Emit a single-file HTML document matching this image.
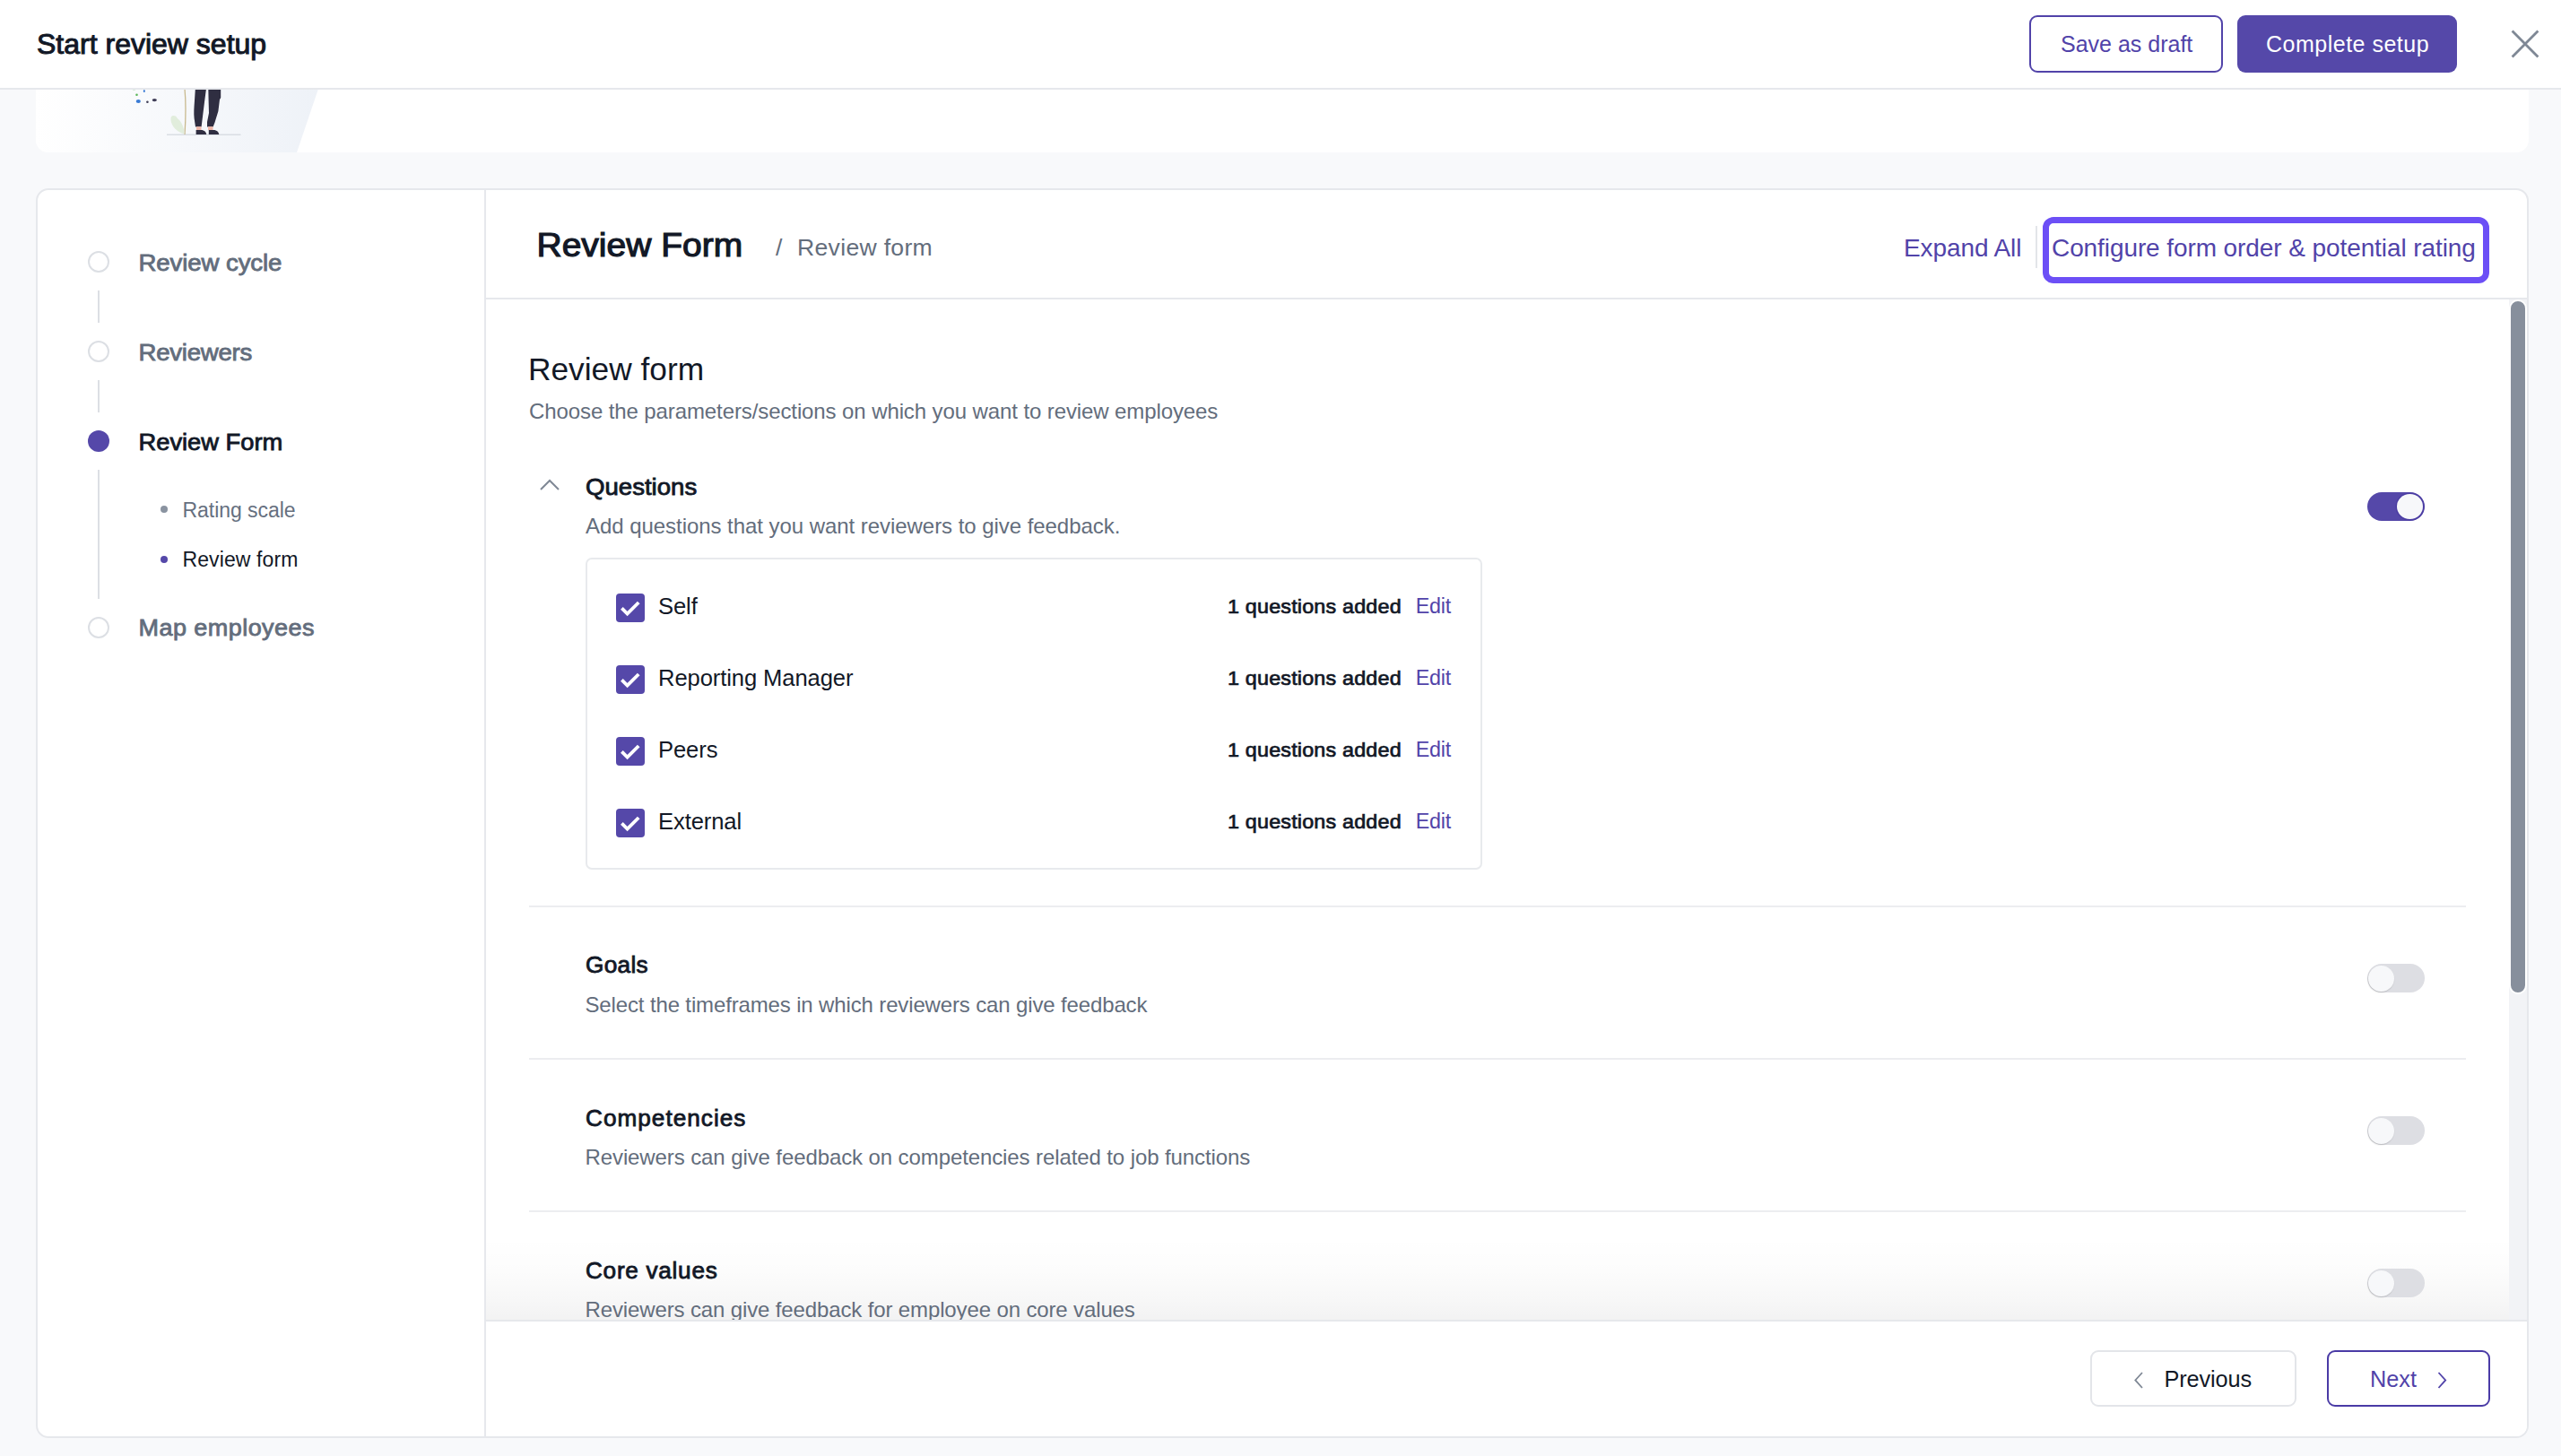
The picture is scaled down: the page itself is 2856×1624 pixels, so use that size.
<!DOCTYPE html>
<html><head><meta charset="utf-8">
<style>
html,body{margin:0;padding:0;}
body{width:2856px;height:1624px;position:relative;overflow:hidden;background:#F8F9FB;font-family:"Liberation Sans",sans-serif;}
.a{position:absolute;box-sizing:border-box;}
.t{position:absolute;white-space:nowrap;}
@media (max-width:1600px){html{zoom:0.5;}}
</style></head><body>
<div class="a" style="left:40px;top:40px;width:2780px;height:130px;background:#fff;border-radius:0 0 14px 14px;overflow:hidden;"><svg width="400" height="130" style="position:absolute;left:0;top:0"><defs><linearGradient id="g1" x1="0" y1="0" x2="1" y2="0"><stop offset="0" stop-color="#FFFFFF"/><stop offset="1" stop-color="#EDF1F7"/></linearGradient></defs><path d="M0 0 H335 L291 130 H0 Z" fill="url(#g1)"/><rect x="146" y="109.6" width="82.5" height="1.2" fill="#D3D7DE"/><path d="M166 59 C168 80 167 95 166 110" stroke="#C8B98E" stroke-width="1.3" fill="none"/><path d="M165.5 109.5 C154 106 149.5 97 150.6 91 C151.5 88.5 154 88.6 156 89.5 C157.5 91.6 158 92.5 159 93 C163 97 165.6 103 165.5 109.5Z" fill="#E1EDDC"/><path d="M177.9 58 H190.1 L188 74 L186.5 86 L184.6 101.4 H178 L176.6 92 C176 86 176.4 80 177 72 Z" fill="#2F2E41"/><path d="M192.3 58 H206.2 L206.2 69 L205 71 L203.4 84 L199.4 97 L197.6 101.4 H191 L191 96 L193 86 L192.6 72 Z" fill="#2F2E41"/><rect x="179" y="101.2" width="5.5" height="3.9" fill="#EFB7A9"/><rect x="192" y="101.2" width="5.5" height="3.9" fill="#EFB7A9"/><path d="M178.6 105 H184 C188 105 190 107.5 190.2 110 H178.6 Z" fill="#2F2E41"/><path d="M192.8 105 H198 C202 105 204 107.5 204.2 110 H192.8 Z" fill="#2F2E41"/><ellipse cx="114.3" cy="73" rx="2.6" ry="2" fill="#3A7BD5"/><circle cx="124.4" cy="73.8" r="1.3" fill="#3F3D56"/><ellipse cx="132.3" cy="71.6" rx="2.6" ry="1.7" fill="#3F3D56"/><circle cx="112.5" cy="65.8" r="1.3" fill="#5BB65A"/><ellipse cx="120.8" cy="61.5" rx="1" ry="1.6" fill="#3A7BD5"/><rect x="108" y="59" width="3" height="1.2" fill="#5BB65A"/></svg></div>
<div class="a" style="left:0;top:0;width:2856px;height:100px;background:#fff;border-bottom:2px solid #E6E8EC;"></div>
<div class="t" style="left:41.0px;top:33.31px;font-size:32px;line-height:32px;color:#121826;letter-spacing:0px;-webkit-text-stroke:1.02px #121826;transform-origin:0 27.09px;transform:scaleY(0.965);">Start review setup</div>
<div class="a" style="left:2263px;top:17px;width:216px;height:64px;border:2px solid #5143A9;border-radius:9px;background:#fff;"></div>
<div class="t" style="left:2298.0px;top:36.63px;font-size:25px;line-height:25px;color:#5143A9;letter-spacing:0px;">Save as draft</div>
<div class="a" style="left:2495px;top:17px;width:245px;height:64px;background:#5548A9;border-radius:9px;"></div>
<div class="t" style="left:2527.0px;top:36.63px;font-size:25px;line-height:25px;color:#FFFFFF;letter-spacing:0.5px;">Complete setup</div>
<svg class="a" style="left:2798px;top:31px" width="36" height="36"><path d="M3.6 3.6 L32.4 32.4 M32.4 3.6 L3.6 32.4" stroke="#7F8895" stroke-width="2.8" stroke-linecap="butt"/></svg>
<div class="a" style="left:40px;top:210px;width:2780px;height:1394px;background:#fff;border:2px solid #E6E8EC;border-radius:14px;overflow:hidden;"></div>
<div class="a" style="left:540px;top:212px;width:2px;height:1390px;background:#E6E8EC;"></div>
<div class="a" style="left:98px;top:280px;width:24px;height:24px;border:2px solid #DCDFE4;border-radius:50%;background:#fff;"></div>
<div class="a" style="left:98px;top:380px;width:24px;height:24px;border:2px solid #DCDFE4;border-radius:50%;background:#fff;"></div>
<div class="a" style="left:98px;top:688px;width:24px;height:24px;border:2px solid #DCDFE4;border-radius:50%;background:#fff;"></div>
<div class="a" style="left:98px;top:480px;width:24px;height:24px;border-radius:50%;background:#5548A9;"></div>
<div class="a" style="left:109px;top:324px;width:2px;height:36px;background:#DCDFE4;"></div>
<div class="a" style="left:109px;top:424px;width:2px;height:36px;background:#DCDFE4;"></div>
<div class="a" style="left:109px;top:524px;width:2px;height:144px;background:#DCDFE4;"></div>
<div class="t" style="left:154.5px;top:278.73px;font-size:27.6px;line-height:27.6px;color:#636D7C;letter-spacing:-0.1px;-webkit-text-stroke:0.88px #636D7C;transform-origin:0 23.37px;transform:scaleY(0.965);">Review cycle</div>
<div class="t" style="left:154.5px;top:378.53px;font-size:27.6px;line-height:27.6px;color:#636D7C;letter-spacing:-0.25px;-webkit-text-stroke:0.88px #636D7C;transform-origin:0 23.37px;transform:scaleY(0.965);">Reviewers</div>
<div class="t" style="left:154.5px;top:479.39px;font-size:27.3px;line-height:27.3px;color:#121826;letter-spacing:0px;-webkit-text-stroke:0.87px #121826;transform-origin:0 23.11px;transform:scaleY(0.965);">Review Form</div>
<div class="t" style="left:154.5px;top:687.14px;font-size:27px;line-height:27px;color:#636D7C;letter-spacing:0.45px;-webkit-text-stroke:0.86px #636D7C;transform-origin:0 22.86px;transform:scaleY(0.965);">Map employees</div>
<div class="a" style="left:178.6px;top:563.7px;width:8.6px;height:8.6px;border-radius:50%;background:#8A93A0;"></div>
<div class="a" style="left:178.6px;top:619.7px;width:8.6px;height:8.6px;border-radius:50%;background:#5548A9;"></div>
<div class="t" style="left:203.5px;top:557.53px;font-size:23px;line-height:23px;color:#66707F;letter-spacing:-0.05px;">Rating scale</div>
<div class="t" style="left:203.5px;top:613.23px;font-size:23px;line-height:23px;color:#121826;letter-spacing:0.1px;">Review form</div>
<div class="t" style="left:598.5px;top:253.28px;font-size:39px;line-height:39px;color:#121826;letter-spacing:0px;-webkit-text-stroke:1.25px #121826;transform-origin:0 33.02px;transform:scaleY(0.965);">Review Form</div>
<div class="t" style="left:865.0px;top:263.28px;font-size:26.6px;line-height:26.6px;color:#636D7C;letter-spacing:0px;">/</div>
<div class="t" style="left:889.0px;top:263.28px;font-size:26.6px;line-height:26.6px;color:#636D7C;letter-spacing:0.3px;">Review form</div>
<div class="t" style="left:2123.0px;top:263.29px;font-size:28px;line-height:28px;color:#5143A9;letter-spacing:-0.1px;">Expand All</div>
<div class="a" style="left:2270px;top:252px;width:2px;height:47px;background:#E3E5E9;"></div>
<div class="a" style="left:2278px;top:242px;width:498px;height:74px;border:7px solid #6C4FF6;border-radius:12px;"></div>
<div class="t" style="left:2288.0px;top:263.29px;font-size:28px;line-height:28px;color:#5143A9;letter-spacing:-0.09px;">Configure form order &amp; potential rating</div>
<div class="a" style="left:542px;top:332px;width:2276px;height:2px;background:#E6E8EC;"></div>
<div class="a" style="left:2798px;top:334px;width:20px;height:1139px;background:#F2F3F6;"></div>
<div class="a" style="left:2798px;top:334px;width:20px;height:775px;background:#878F9C;border:2px solid #fff;border-radius:10px;"></div>
<div class="a" style="left:542px;top:1380px;width:2256px;height:93px;background:linear-gradient(to bottom, rgba(0,0,10,0) 0%, rgba(0,0,10,0.012) 40%, rgba(0,0,10,0.03) 75%, rgba(0,0,10,0.05) 100%);"></div>
<div class="t" style="left:589.0px;top:393.86px;font-size:35.3px;line-height:35.3px;color:#121826;letter-spacing:0px;">Review form</div>
<div class="t" style="left:590.0px;top:447.18px;font-size:24px;line-height:24px;color:#636D7C;letter-spacing:-0.1px;">Choose the parameters/sections on which you want to review employees</div>
<svg class="a" style="left:600px;top:532px" width="26" height="18"><path d="M3 14 L13 4 L23 14" stroke="#7F8895" stroke-width="2" fill="none"/></svg>
<div class="t" style="left:653.0px;top:528.63px;font-size:27.6px;line-height:27.6px;color:#121826;letter-spacing:0px;-webkit-text-stroke:0.88px #121826;transform-origin:0 23.37px;transform:scaleY(0.965);">Questions</div>
<div class="t" style="left:653.0px;top:575.28px;font-size:24px;line-height:24px;color:#636D7C;letter-spacing:-0.05px;">Add questions that you want reviewers to give feedback.</div>
<div class="a" style="left:2640px;top:549px;width:64px;height:32px;border-radius:16px;background:#5548A9;"></div>
<div class="a" style="left:2673px;top:551px;width:29px;height:28px;border-radius:50%;background:#F7F8FA;box-shadow:0 0 0 1.5px #4B3DA3;"></div>
<div class="a" style="left:653px;top:622px;width:1000px;height:348px;border:2px solid #E8EAED;border-radius:7px;"></div>
<div class="a" style="left:687px;top:662px;width:32px;height:32px;border-radius:4px;background:#5548A9;"></div>
<svg class="a" style="left:687px;top:662px" width="32" height="32"><path d="M6.4 16.4 L12.6 22.6 L25.2 10" stroke="#fff" stroke-width="3.8" fill="none" stroke-linecap="butt"/></svg>
<div class="t" style="left:734.0px;top:663.92px;font-size:25.6px;line-height:25.6px;color:#121826;letter-spacing:-0.1px;">Self</div>
<div class="t" style="left:1369.0px;top:665.27px;font-size:23.3px;line-height:23.3px;color:#121826;letter-spacing:0.2px;-webkit-text-stroke:0.75px #121826;transform-origin:0 19.73px;transform:scaleY(0.965);">1 questions added</div>
<div class="t" style="left:1578.7px;top:665.27px;font-size:23.3px;line-height:23.3px;color:#5143A9;letter-spacing:-0.2px;">Edit</div>
<div class="a" style="left:687px;top:742px;width:32px;height:32px;border-radius:4px;background:#5548A9;"></div>
<svg class="a" style="left:687px;top:742px" width="32" height="32"><path d="M6.4 16.4 L12.6 22.6 L25.2 10" stroke="#fff" stroke-width="3.8" fill="none" stroke-linecap="butt"/></svg>
<div class="t" style="left:734.0px;top:743.92px;font-size:25.6px;line-height:25.6px;color:#121826;letter-spacing:-0.1px;">Reporting Manager</div>
<div class="t" style="left:1369.0px;top:745.27px;font-size:23.3px;line-height:23.3px;color:#121826;letter-spacing:0.2px;-webkit-text-stroke:0.75px #121826;transform-origin:0 19.73px;transform:scaleY(0.965);">1 questions added</div>
<div class="t" style="left:1578.7px;top:745.27px;font-size:23.3px;line-height:23.3px;color:#5143A9;letter-spacing:-0.2px;">Edit</div>
<div class="a" style="left:687px;top:822px;width:32px;height:32px;border-radius:4px;background:#5548A9;"></div>
<svg class="a" style="left:687px;top:822px" width="32" height="32"><path d="M6.4 16.4 L12.6 22.6 L25.2 10" stroke="#fff" stroke-width="3.8" fill="none" stroke-linecap="butt"/></svg>
<div class="t" style="left:734.0px;top:823.92px;font-size:25.6px;line-height:25.6px;color:#121826;letter-spacing:-0.1px;">Peers</div>
<div class="t" style="left:1369.0px;top:825.27px;font-size:23.3px;line-height:23.3px;color:#121826;letter-spacing:0.2px;-webkit-text-stroke:0.75px #121826;transform-origin:0 19.73px;transform:scaleY(0.965);">1 questions added</div>
<div class="t" style="left:1578.7px;top:825.27px;font-size:23.3px;line-height:23.3px;color:#5143A9;letter-spacing:-0.2px;">Edit</div>
<div class="a" style="left:687px;top:902px;width:32px;height:32px;border-radius:4px;background:#5548A9;"></div>
<svg class="a" style="left:687px;top:902px" width="32" height="32"><path d="M6.4 16.4 L12.6 22.6 L25.2 10" stroke="#fff" stroke-width="3.8" fill="none" stroke-linecap="butt"/></svg>
<div class="t" style="left:734.0px;top:903.92px;font-size:25.6px;line-height:25.6px;color:#121826;letter-spacing:-0.1px;">External</div>
<div class="t" style="left:1369.0px;top:905.27px;font-size:23.3px;line-height:23.3px;color:#121826;letter-spacing:0.2px;-webkit-text-stroke:0.75px #121826;transform-origin:0 19.73px;transform:scaleY(0.965);">1 questions added</div>
<div class="t" style="left:1578.7px;top:905.27px;font-size:23.3px;line-height:23.3px;color:#5143A9;letter-spacing:-0.2px;">Edit</div>
<div class="a" style="left:590px;top:1010px;width:2160px;height:2px;background:#ECEDF0;"></div>
<div class="a" style="left:590px;top:1180px;width:2160px;height:2px;background:#ECEDF0;"></div>
<div class="a" style="left:590px;top:1350px;width:2160px;height:2px;background:#ECEDF0;"></div>
<div class="t" style="left:653.0px;top:1063.22px;font-size:26.2px;line-height:26.2px;color:#121826;letter-spacing:0.3px;-webkit-text-stroke:0.84px #121826;transform-origin:0 22.18px;transform:scaleY(0.965);">Goals</div>
<div class="t" style="left:652.5px;top:1109.08px;font-size:24px;line-height:24px;color:#636D7C;letter-spacing:-0.14px;">Select the timeframes in which reviewers can give feedback</div>
<div class="a" style="left:2640px;top:1075px;width:64px;height:32px;border-radius:16px;background:#DDDEE3;"></div>
<div class="a" style="left:2641px;top:1076.5px;width:29px;height:29px;border-radius:50%;background:#F7F8FA;box-shadow:-0.5px 1px 1.5px rgba(0,0,0,0.18);"></div>
<div class="t" style="left:653.0px;top:1234.42px;font-size:26.2px;line-height:26.2px;color:#121826;letter-spacing:1.0px;-webkit-text-stroke:0.84px #121826;transform-origin:0 22.18px;transform:scaleY(0.965);">Competencies</div>
<div class="t" style="left:652.5px;top:1279.48px;font-size:24px;line-height:24px;color:#636D7C;letter-spacing:-0.1px;">Reviewers can give feedback on competencies related to job functions</div>
<div class="a" style="left:2640px;top:1245px;width:64px;height:32px;border-radius:16px;background:#DDDEE3;"></div>
<div class="a" style="left:2641px;top:1246.5px;width:29px;height:29px;border-radius:50%;background:#F7F8FA;box-shadow:-0.5px 1px 1.5px rgba(0,0,0,0.18);"></div>
<div class="t" style="left:653.0px;top:1403.82px;font-size:26.2px;line-height:26.2px;color:#121826;letter-spacing:0.7px;-webkit-text-stroke:0.84px #121826;transform-origin:0 22.18px;transform:scaleY(0.965);">Core values</div>
<div class="t" style="left:652.5px;top:1448.88px;font-size:24px;line-height:24px;color:#636D7C;letter-spacing:-0.13px;">Reviewers can give feedback for employee on core values</div>
<div class="a" style="left:2640px;top:1415px;width:64px;height:32px;border-radius:16px;background:#DDDEE3;"></div>
<div class="a" style="left:2641px;top:1416.5px;width:29px;height:29px;border-radius:50%;background:#F7F8FA;box-shadow:-0.5px 1px 1.5px rgba(0,0,0,0.18);"></div>
<div class="a" style="left:542px;top:1472px;width:2276px;height:130px;background:#fff;border-top:2px solid #E6E8EC;border-bottom-right-radius:12px;"></div>
<div class="a" style="left:2331px;top:1506px;width:230px;height:63px;border:2px solid #E3E5E9;border-radius:9px;"></div>
<svg class="a" style="left:2374px;top:1527px" width="22" height="26"><path d="M15 4 L7.3 12.4 L15 21" stroke="#7F8895" stroke-width="1.8" fill="none"/></svg>
<div class="t" style="left:2413.4px;top:1525.78px;font-size:25.3px;line-height:25.3px;color:#121826;letter-spacing:-0.1px;">Previous</div>
<div class="a" style="left:2595px;top:1506px;width:182px;height:63px;border:2px solid #4A3BA6;border-radius:9px;"></div>
<div class="t" style="left:2643.0px;top:1525.78px;font-size:25.3px;line-height:25.3px;color:#5143A9;letter-spacing:0px;">Next</div>
<svg class="a" style="left:2713px;top:1527px" width="22" height="26"><path d="M6.5 4 L14.2 12.4 L6.5 21" stroke="#5143A9" stroke-width="1.8" fill="none"/></svg>
</body></html>
